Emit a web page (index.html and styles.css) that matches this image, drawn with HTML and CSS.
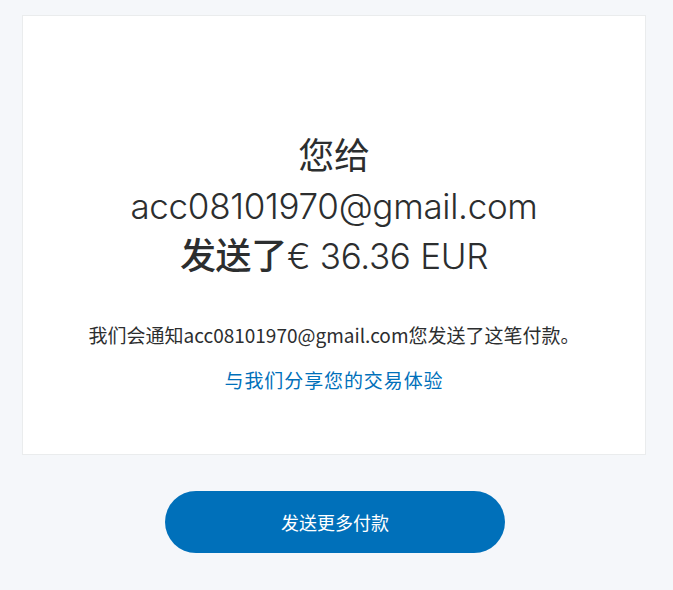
FILE: index.html
```html
<!DOCTYPE html>
<html lang="zh">
<head>
    <meta charset="UTF-8">
    <title>付款已发送</title>
    <link rel="stylesheet" href="styles.css">
</head>
<body>
    <div class="page">
        <div class="card">
            <h1 class="headline">
                <span class="cjk">您给</span><br>
                acc08101970@gmail.com<br>
                <span class="cjk strong">发送了</span>€ 36.36 EUR
            </h1>
            <p class="note">我们会通知acc08101970@gmail.com您发送了这笔付款。</p>
            <a class="share" href="#">与我们分享您的交易体验</a>
        </div>
        <div class="actions">
            <button class="send-btn">发送更多付款</button>
        </div>
    </div>
</body>
</html>
```

FILE: styles.css
```css
body {
    margin: 0;
    min-height: 100vh;
    background: #f5f7fa;
    color: #2c2e2f;
    font-family: "Noto Sans CJK SC", sans-serif;
}

.page {
    width: 624px;
    padding: 15px 0 0 22px;
}

.card {
    background: #fff;
    border: 1px solid #eaeced;
    padding: 115px 20px 61px;
    text-align: center;
}

.headline {
    margin: 0;
    font-family: "Inter", "Noto Sans CJK SC", sans-serif;
    font-weight: 300;
    font-size: 35px;
    line-height: 50px;
    letter-spacing: -0.3px;
}

.headline .cjk {
    font-family: "Noto Sans CJK SC", sans-serif;
    font-weight: 400;
    font-size: 36px;
    line-height: 1;
}

.headline .strong {
    font-weight: 500;
}

.note {
    margin: 42px 0 0;
    font-size: 19px;
    line-height: 24px;
}

.share {
    display: inline-block;
    margin-top: 21px;
    font-size: 19px;
    line-height: 24px;
    letter-spacing: 0.9px;
    color: #0070ba;
    text-decoration: none;
}

.actions {
    display: flex;
    justify-content: center;
    padding: 36px 0 0 2px;
}

.send-btn {
    width: 340px;
    height: 62px;
    border: none;
    border-radius: 31px;
    background: #0070ba;
    color: #fff;
    font-family: "Noto Sans CJK SC", sans-serif;
    font-size: 18px;
    cursor: pointer;
}
```
